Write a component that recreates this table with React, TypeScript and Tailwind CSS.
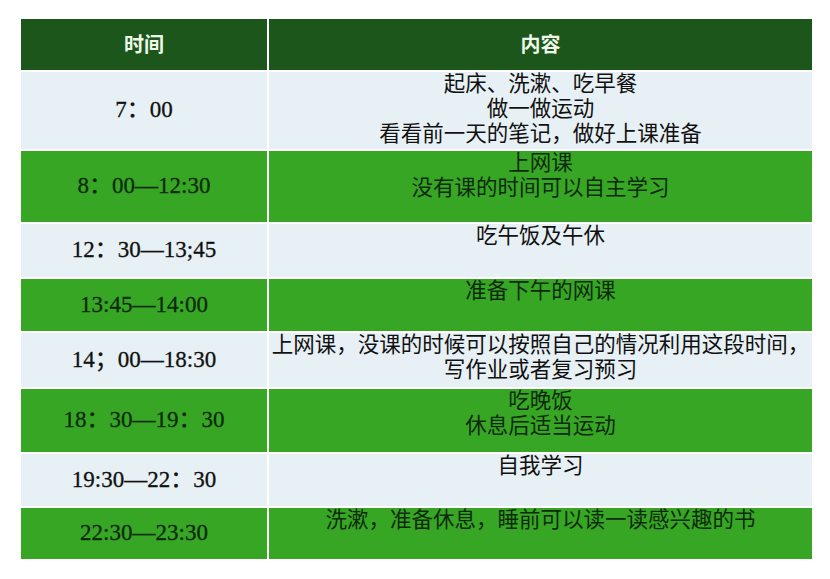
const rows: { time: string; lines: string[]; green: boolean; h: string }[] = [
  { time: '7：00', lines: ['起床、洗漱、吃早餐', '做一做运动', '看看前一天的笔记，做好上课准备'], green: false, h: 'h-[77px]' },
  { time: '8：00—12:30', lines: ['上网课', '没有课的时间可以自主学习'], green: true, h: 'h-[71px]' },
  { time: '12：30—13;45', lines: ['吃午饭及午休'], green: false, h: 'h-[53px]' },
  { time: '13:45—14:00', lines: ['准备下午的网课'], green: true, h: 'h-[52px]' },
  { time: '14；00—18:30', lines: ['上网课，没课的时候可以按照自己的情况利用这段时间，', '写作业或者复习预习'], green: false, h: 'h-[54px]' },
  { time: '18：30—19：30', lines: ['吃晚饭', '休息后适当运动'], green: true, h: 'h-[63px]' },
  { time: '19:30—22：30', lines: ['自我学习'], green: false, h: 'h-[52px]' },
  { time: '22:30—23:30', lines: ['洗漱，准备休息，睡前可以读一读感兴趣的书'], green: true, h: 'h-[51px]' },
];

export default function App() {
  return (
    <div className="w-[830px] h-[579px] bg-white pl-[21px] pt-[19px] font-['Liberation_Serif','Noto_Sans_CJK_SC',serif]">
      <div className="flex w-[791px] flex-col gap-[2px]">
        {/* header */}
        <div className="grid h-[51px] grid-cols-[246px_543px] gap-[2px] bg-white">
          <div className="flex items-center justify-center bg-[#1c561b] text-[20px] font-bold text-[#eef8e8]">
            时间
          </div>
          <div className="flex items-center justify-center bg-[#1c561b] text-[20px] font-bold text-[#eef8e8]">
            内容
          </div>
        </div>
        {rows.map((r) => (
          <div key={r.time} className={`grid grid-cols-[246px_543px] gap-[2px] ${r.h}`}>
            <div
              className={
                r.green
                  ? 'flex items-center justify-center bg-[#37a624] text-[23px] text-[#0e2a0c] [-webkit-text-stroke:0.3px_#0e2a0c]'
                  : 'flex items-center justify-center bg-[#e7f0f4] text-[23px] text-[#111111] [-webkit-text-stroke:0.3px_#111111]'
              }
            >
              {r.time}
            </div>
            <div
              className={
                r.green
                  ? 'flex flex-col items-center bg-[#37a624] text-[21.5px] leading-[25px] text-[#0e2a0c]'
                  : 'flex flex-col items-center bg-[#e7f0f4] text-[21.5px] leading-[25px] text-[#111111]'
              }
            >
              {r.lines.map((l) => (
                <p key={l} className="whitespace-nowrap">
                  {l}
                </p>
              ))}
            </div>
          </div>
        ))}
      </div>
    </div>
  );
}
